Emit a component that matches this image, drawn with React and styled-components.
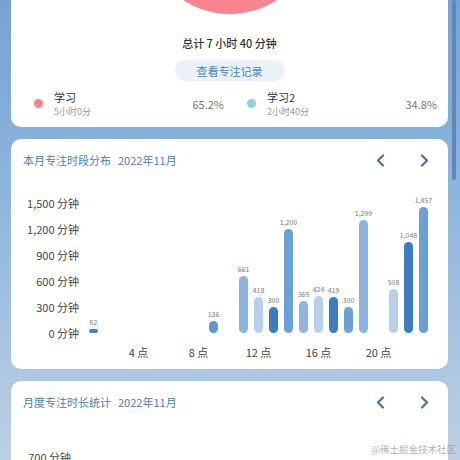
import React from "react";
import styled, { createGlobalStyle } from "styled-components";

const Global = createGlobalStyle`
  html, body { margin: 0; padding: 0; width: 460px; height: 460px; overflow: hidden; }
  body { font-family: "Noto Sans CJK SC", "Noto Sans", sans-serif; }
  * { box-sizing: border-box; }
`;

const Page = styled.div`
  position: relative;
  width: 460px;
  height: 460px;
  overflow: hidden;
  background: linear-gradient(180deg, #76a3d3 0%, #8db4dc 40%, #bdd0e4 100%);
  padding: 0 12px 0 11px;
`;

const Content = styled.div`
  margin-top: -174px;
  display: flex;
  flex-direction: column;
  gap: 12px;
`;

const Card = styled.div`
  background: #fff;
  border-radius: 10px;
  padding: ${(p) => p.$pad || "0"};
`;

const PieWrap = styled.div`
  display: flex;
  flex-direction: column;
  align-items: center;
  padding-top: 16px;
`;

const Total = styled.div`
  margin-top: 21px;
  font-size: 11px;
  line-height: 16px;
  color: #333;
  font-weight: 500;
`;

const RecordButton = styled.div`
  margin-top: 9px;
  width: 110px;
  height: 21px;
  border-radius: 11px;
  background: #eaf1f8;
  color: #4a84c2;
  font-size: 11px;
  display: flex;
  align-items: center;
  justify-content: center;
`;

const Legend = styled.div`
  display: grid;
  grid-template-columns: 1fr 1fr;
  gap: 23px;
  padding: 0 0 0 12px;
  margin-top: 8px;
`;

const LegendItem = styled.div`
  display: flex;
  align-items: center;
`;

const Dot = styled.span`
  width: 9px;
  height: 9px;
  border-radius: 50%;
  background: ${(p) => p.$c};
  margin-right: 11px;
  flex: none;
`;

const LegendText = styled.div`
  display: flex;
  flex-direction: column;
`;

const LegendName = styled.div`
  font-size: 11px;
  line-height: 16px;
  color: #333;
`;

const LegendSub = styled.div`
  font-size: 9px;
  line-height: 13px;
  color: #999;
`;

const Percent = styled.span`
  margin-left: auto;
  font-size: 11px;
  color: #777;
`;

const TitleRow = styled.div`
  display: flex;
  align-items: center;
  padding: 13px 12px 0 12px;
  height: 29px;
`;

const Title = styled.div`
  font-size: 11px;
  line-height: 16px;
  color: #4a7db3;
  flex: 1;
  span { margin-left: 7px; }
`;

const NavGroup = styled.div`
  display: flex;
  gap: 20px;
`;

const NavButton = styled.div`
  width: 24px;
  height: 16px;
  display: flex;
  align-items: center;
  justify-content: center;
`;

const Chart = styled.div`
  display: grid;
  grid-template-columns: ${(p) => p.$labelW || 68}px 360px;
  margin-top: 22px;
`;

const YAxis = styled.div`
  display: flex;
  flex-direction: column;
  justify-content: space-between;
  align-items: flex-end;
  height: ${(p) => p.$h}px;
`;

const YLabel = styled.div`
  font-size: 11px;
  line-height: 26px;
  height: 26px;
  color: #444;
  white-space: nowrap;
`;

const Plot = styled.div`
  display: grid;
  grid-template-columns: repeat(24, 15px);
  height: 156px;
  padding-bottom: 13px;
  margin-left: -8px;
  align-items: end;
`;

const Slot = styled.div`
  display: flex;
  flex-direction: column;
  align-items: center;
  justify-content: flex-end;
  gap: 3px;
`;

const ValueLabel = styled.div`
  font-size: 7px;
  line-height: 8px;
  color: #7a7a7a;
  white-space: nowrap;
`;

const Bar = styled.div`
  width: 9px;
  border-radius: 4.5px;
  background: ${(p) => p.$c};
`;

const XAxis = styled.div`
  grid-column: 2;
  display: grid;
  grid-template-columns: repeat(24, 15px);
  margin-left: -8px;
  padding-bottom: 11px;
`;

const XLabel = styled.div`
  display: flex;
  justify-content: center;
  font-size: 11px;
  line-height: 12px;
  height: 12px;
  color: #444;
  white-space: nowrap;
`;

const Chart3 = styled.div`
  margin-top: 34px;
  padding-bottom: 40px;
  display: flex;
  width: 60px;
  justify-content: flex-end;
`;

const Scrollbar = styled.div`
  position: absolute;
  top: 0;
  left: 452px;
  width: 4px;
  height: 180px;
  border-radius: 2px;
  background: #5f88b9;
`;

const Watermark = styled.div`
  position: absolute;
  right: 4px;
  top: 442px;
  font-size: 9.5px;
  line-height: 14px;
  color: rgba(150, 150, 150, 0.75);
  white-space: nowrap;
`;

const bars = {
  1: [52, "#4582c4"],
  9: [136, "#5c96d3"],
  11: [661, "#8db4de"],
  12: [418, "#b7d1ea"],
  13: [300, "#3d7cc1"],
  14: [1200, "#6aa0d3"],
  15: [365, "#8db4de"],
  16: [424, "#b7d1ea"],
  17: [419, "#3d7cc1"],
  18: [300, "#6aa0d3"],
  19: [1299, "#8db4de"],
  21: [508, "#b7d1ea"],
  22: [1048, "#3d7cc1"],
  23: [1457, "#6aa0d3"],
};

const fmt = (n) => n.toLocaleString("en-US");

function Pie() {
  const r = 86;
  const frac = 0.652;
  const a = frac * Math.PI * 2;
  const x = r + r * Math.sin(a);
  const y = r - r * Math.cos(a);
  return (
    <svg width="172" height="172" viewBox="0 0 172 172">
      <path d={`M86 86 L86 0 A86 86 0 1 1 ${x} ${y} Z`} fill="#f7848f" />
      <path d={`M86 86 L${x} ${y} A86 86 0 0 1 86 0 Z`} fill="#8fd3d0" />
    </svg>
  );
}

function Chevron({ dir }) {
  return (
    <svg width="9" height="13" viewBox="0 0 9 13">
      <polyline
        points={dir === "left" ? "7,1.5 2,6.5 7,11.5" : "2,1.5 7,6.5 2,11.5"}
        fill="none"
        stroke="#3f74ae"
        strokeWidth="2.2"
        strokeLinecap="round"
        strokeLinejoin="round"
      />
    </svg>
  );
}

function Header({ title }) {
  return (
    <TitleRow>
      <Title>
        {title}
        <span>2022年11月</span>
      </Title>
      <NavGroup>
        <NavButton><Chevron dir="left" /></NavButton>
        <NavButton><Chevron dir="right" /></NavButton>
      </NavGroup>
    </TitleRow>
  );
}

export default function App() {
  const hours = Array.from({ length: 24 }, (_, i) => i);
  return (
    <>
      <Global />
      <Page>
        <Content>
          <Card $pad="0 11px 9px 11px">
            <PieWrap>
              <Pie />
              <Total>总计 7 小时 40 分钟</Total>
              <RecordButton>查看专注记录</RecordButton>
            </PieWrap>
            <Legend>
              <LegendItem>
                <Dot $c="#f4828e" />
                <LegendText>
                  <LegendName>学习</LegendName>
                  <LegendSub>5小时0分</LegendSub>
                </LegendText>
                <Percent>65.2%</Percent>
              </LegendItem>
              <LegendItem>
                <Dot $c="#8fd3d0" />
                <LegendText>
                  <LegendName>学习2</LegendName>
                  <LegendSub>2小时40分</LegendSub>
                </LegendText>
                <Percent>34.8%</Percent>
              </LegendItem>
            </Legend>
          </Card>

          <Card>
            <Header title="本月专注时段分布" />
            <Chart>
              <YAxis $h={156}>
                {["1,500", "1,200", "900", "600", "300", "0"].map((v) => (
                  <YLabel key={v}>{v} 分钟</YLabel>
                ))}
              </YAxis>
              <Plot>
                {hours.map((h) => (
                  <Slot key={h}>
                    {bars[h] && (
                      <>
                        <ValueLabel>{fmt(bars[h][0])}</ValueLabel>
                        <Bar
                          $c={bars[h][1]}
                          style={{ height: Math.max(4.5, (bars[h][0] * 130) / 1500) }}
                        />
                      </>
                    )}
                  </Slot>
                ))}
              </Plot>
              <XAxis>
                {hours.map((h) => (
                  <XLabel key={h}>{h > 0 && h % 4 === 0 ? `${h} 点` : ""}</XLabel>
                ))}
              </XAxis>
            </Chart>
          </Card>

          <Card>
            <Header title="月度专注时长统计" />
            <Chart3>
              <YLabel>700 分钟</YLabel>
            </Chart3>
          </Card>
        </Content>
        <Scrollbar />
        <Watermark>@稀土掘金技术社区</Watermark>
      </Page>
    </>
  );
}
